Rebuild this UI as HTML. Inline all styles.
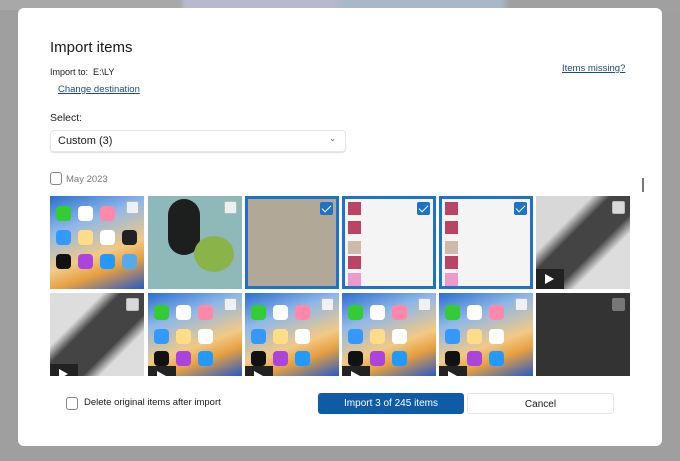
<!DOCTYPE html>
<html><head><style>
*{box-sizing:border-box;margin:0;padding:0}
body{width:680px;height:461px;overflow:hidden;background:#9f9f9f;font-family:"Liberation Sans",sans-serif;position:relative;color:#1a1a1a}
.top{position:absolute;top:0;left:0;width:680px;height:10px;background:linear-gradient(90deg,#a8a8a8 0 180px,#b8b8d0 185px 330px,#a8b8c8 345px 500px,#a0a0a0 510px)}
.dlg{position:absolute;left:18px;top:8px;width:644px;height:438px;background:#fff;border-radius:6px}
.abs{position:absolute}
h1{position:absolute;left:50px;top:39px;font-size:15px;font-weight:normal}
.link{color:#1d4f7a;text-decoration:underline;font-size:10px}
.sel{position:absolute;left:50px;top:130px;width:296px;height:22px;border:1px solid #e6e6e6;border-radius:4px;box-shadow:0 1px 1px #ddd;font-size:11px;padding:4px 7px}
.cb{position:absolute;width:12px;height:13px;border:1px solid #888;border-radius:3px;background:#fff}
.t{position:absolute;width:94px;height:93px;overflow:hidden}
.r2{top:293px;height:83px}
.ios{background:linear-gradient(160deg,#2c6fd0 0%,#8fb8e8 30%,#f2c985 60%,#e6a040 75%,#2659c9 100%)}
.ios i{position:absolute;width:15px;height:15px;border-radius:4px}
.ck{position:absolute;right:5px;top:5px;width:13px;height:13px;border:1px solid #bbb;border-radius:2px;background:rgba(255,255,255,.8)}
.on{border:3px solid #1d73c9}
.on .ck{background:#1d73c9;border-color:#1d73c9;right:3px;top:3px}
.on .ck:after{content:"";position:absolute;left:3px;top:0px;width:4px;height:8px;border:solid #fff;border-width:0 1.5px 1.5px 0;transform:rotate(45deg)}
.play{position:absolute;left:0;bottom:0;width:28px;height:20px;background:#222}
.play:after{content:"";position:absolute;left:9px;top:5px;border-left:9px solid #fff;border-top:5px solid transparent;border-bottom:5px solid transparent}
.btn{position:absolute;top:393px;height:21px;font-size:10px;text-align:center;line-height:21px;border-radius:3px}
.menu{background:#f4f4f4}
.menu b{position:absolute;left:3px;width:13px;height:13px;background:#b46}
</style></head><body>
<div class="top"></div>
<div class="dlg"></div>
<h1>Import items</h1>
<div class="abs" style="left:50px;top:67px;font-size:9px">Import to:&nbsp; E:\LY</div>
<div class="abs link" style="left:58px;top:84px;font-size:9.5px">Change destination</div>
<div class="abs link" style="left:562px;top:63px;font-size:9.5px">Items missing?</div>
<div class="abs" style="left:50px;top:112px;font-size:10.5px">Select:</div>
<div class="sel">Custom (3)<span style="position:absolute;right:9px;top:3px;font-size:8px;color:#555">&#8964;</span></div>
<div class="cb" style="left:50px;top:172px"></div>
<div class="abs" style="left:66px;top:174px;font-size:9.5px;color:#777">May 2023</div>
<div class="abs" style="left:642px;top:178px;width:2px;height:14px;background:#777"></div>

<div class="t ios" style="left:50px;top:196px"><div class="ck"></div>
<i style="left:6px;top:10px;background:#3c3"></i><i style="left:28px;top:10px;background:#fff"></i><i style="left:50px;top:10px;background:#f8a"></i>
<i style="left:6px;top:34px;background:#39f"></i><i style="left:28px;top:34px;background:#fd8"></i><i style="left:50px;top:34px;background:#fff"></i><i style="left:72px;top:34px;background:#222"></i>
<i style="left:6px;top:58px;background:#111"></i><i style="left:28px;top:58px;background:#a4d"></i><i style="left:50px;top:58px;background:#29f"></i><i style="left:72px;top:58px;background:#5ae"></i></div>
<div class="t" style="left:148px;top:196px;background:#8fb9b9"><div class="abs" style="left:20px;top:3px;width:32px;height:56px;border-radius:16px;background:#1d1f1f"></div><div class="abs" style="left:46px;top:40px;width:40px;height:36px;border-radius:50%;background:#8ab34a"></div><div class="ck"></div></div>
<div class="t on" style="left:245px;top:196px;background:#b1a897"><div class="ck"></div></div>
<div class="t on menu" style="left:342px;top:196px"><b style="top:3px"></b><b style="top:22px"></b><b style="top:42px;background:#cba"></b><b style="top:57px"></b><b style="top:74px;background:#e9c"></b><div class="ck"></div></div>
<div class="t on menu" style="left:439px;top:196px"><b style="top:3px"></b><b style="top:22px"></b><b style="top:42px;background:#cba"></b><b style="top:57px"></b><b style="top:74px;background:#e9c"></b><div class="ck"></div></div>
<div class="t" style="left:536px;top:196px;background:linear-gradient(135deg,#d8d8d8 0 30%,#444 40% 60%,#ddd 70%)"><div class="ck"></div><div class="play"></div></div>

<div class="t r2" style="left:50px;background:linear-gradient(135deg,#ddd 0 30%,#444 40% 65%,#ddd 75%)"><div class="ck"></div><div class="play" style="height:12px"></div></div>
<div class="t r2 ios" style="left:148px"><div class="ck"></div><i style="left:6px;top:12px;background:#3c3"></i><i style="left:28px;top:12px;background:#fff"></i><i style="left:50px;top:12px;background:#f8a"></i><i style="left:6px;top:36px;background:#39f"></i><i style="left:28px;top:36px;background:#fd8"></i><i style="left:50px;top:36px;background:#fff"></i><i style="left:6px;top:58px;background:#111"></i><i style="left:28px;top:58px;background:#a4d"></i><i style="left:50px;top:58px;background:#29f"></i><div class="play" style="height:10px"></div></div>
<div class="t r2 ios" style="left:245px"><div class="ck"></div><i style="left:6px;top:12px;background:#3c3"></i><i style="left:28px;top:12px;background:#fff"></i><i style="left:50px;top:12px;background:#f8a"></i><i style="left:6px;top:36px;background:#39f"></i><i style="left:28px;top:36px;background:#fd8"></i><i style="left:50px;top:36px;background:#fff"></i><i style="left:6px;top:58px;background:#111"></i><i style="left:28px;top:58px;background:#a4d"></i><i style="left:50px;top:58px;background:#29f"></i><div class="play" style="height:10px"></div></div>
<div class="t r2 ios" style="left:342px"><div class="ck"></div><i style="left:6px;top:12px;background:#3c3"></i><i style="left:28px;top:12px;background:#fff"></i><i style="left:50px;top:12px;background:#f8a"></i><i style="left:6px;top:36px;background:#39f"></i><i style="left:28px;top:36px;background:#fd8"></i><i style="left:50px;top:36px;background:#fff"></i><i style="left:6px;top:58px;background:#111"></i><i style="left:28px;top:58px;background:#a4d"></i><i style="left:50px;top:58px;background:#29f"></i><div class="play" style="height:10px"></div></div>
<div class="t r2 ios" style="left:439px"><div class="ck"></div><i style="left:6px;top:12px;background:#3c3"></i><i style="left:28px;top:12px;background:#fff"></i><i style="left:50px;top:12px;background:#f8a"></i><i style="left:6px;top:36px;background:#39f"></i><i style="left:28px;top:36px;background:#fd8"></i><i style="left:50px;top:36px;background:#fff"></i><i style="left:6px;top:58px;background:#111"></i><i style="left:28px;top:58px;background:#a4d"></i><i style="left:50px;top:58px;background:#29f"></i><div class="play" style="height:10px"></div></div>
<div class="t r2" style="left:536px;background:#333"><div class="ck" style="background:#777;border-color:#777"></div></div>

<div class="cb" style="left:66px;top:397px"></div>
<div class="abs" style="left:84px;top:397px;font-size:9.5px">Delete original items after import</div>
<div class="btn" style="left:318px;width:146px;background:#0f5ca6;color:#fff">Import 3 of 245 items</div>
<div class="btn" style="left:467px;width:147px;border:1px solid #e6e6e6;background:#fff">Cancel</div>
</body></html>
